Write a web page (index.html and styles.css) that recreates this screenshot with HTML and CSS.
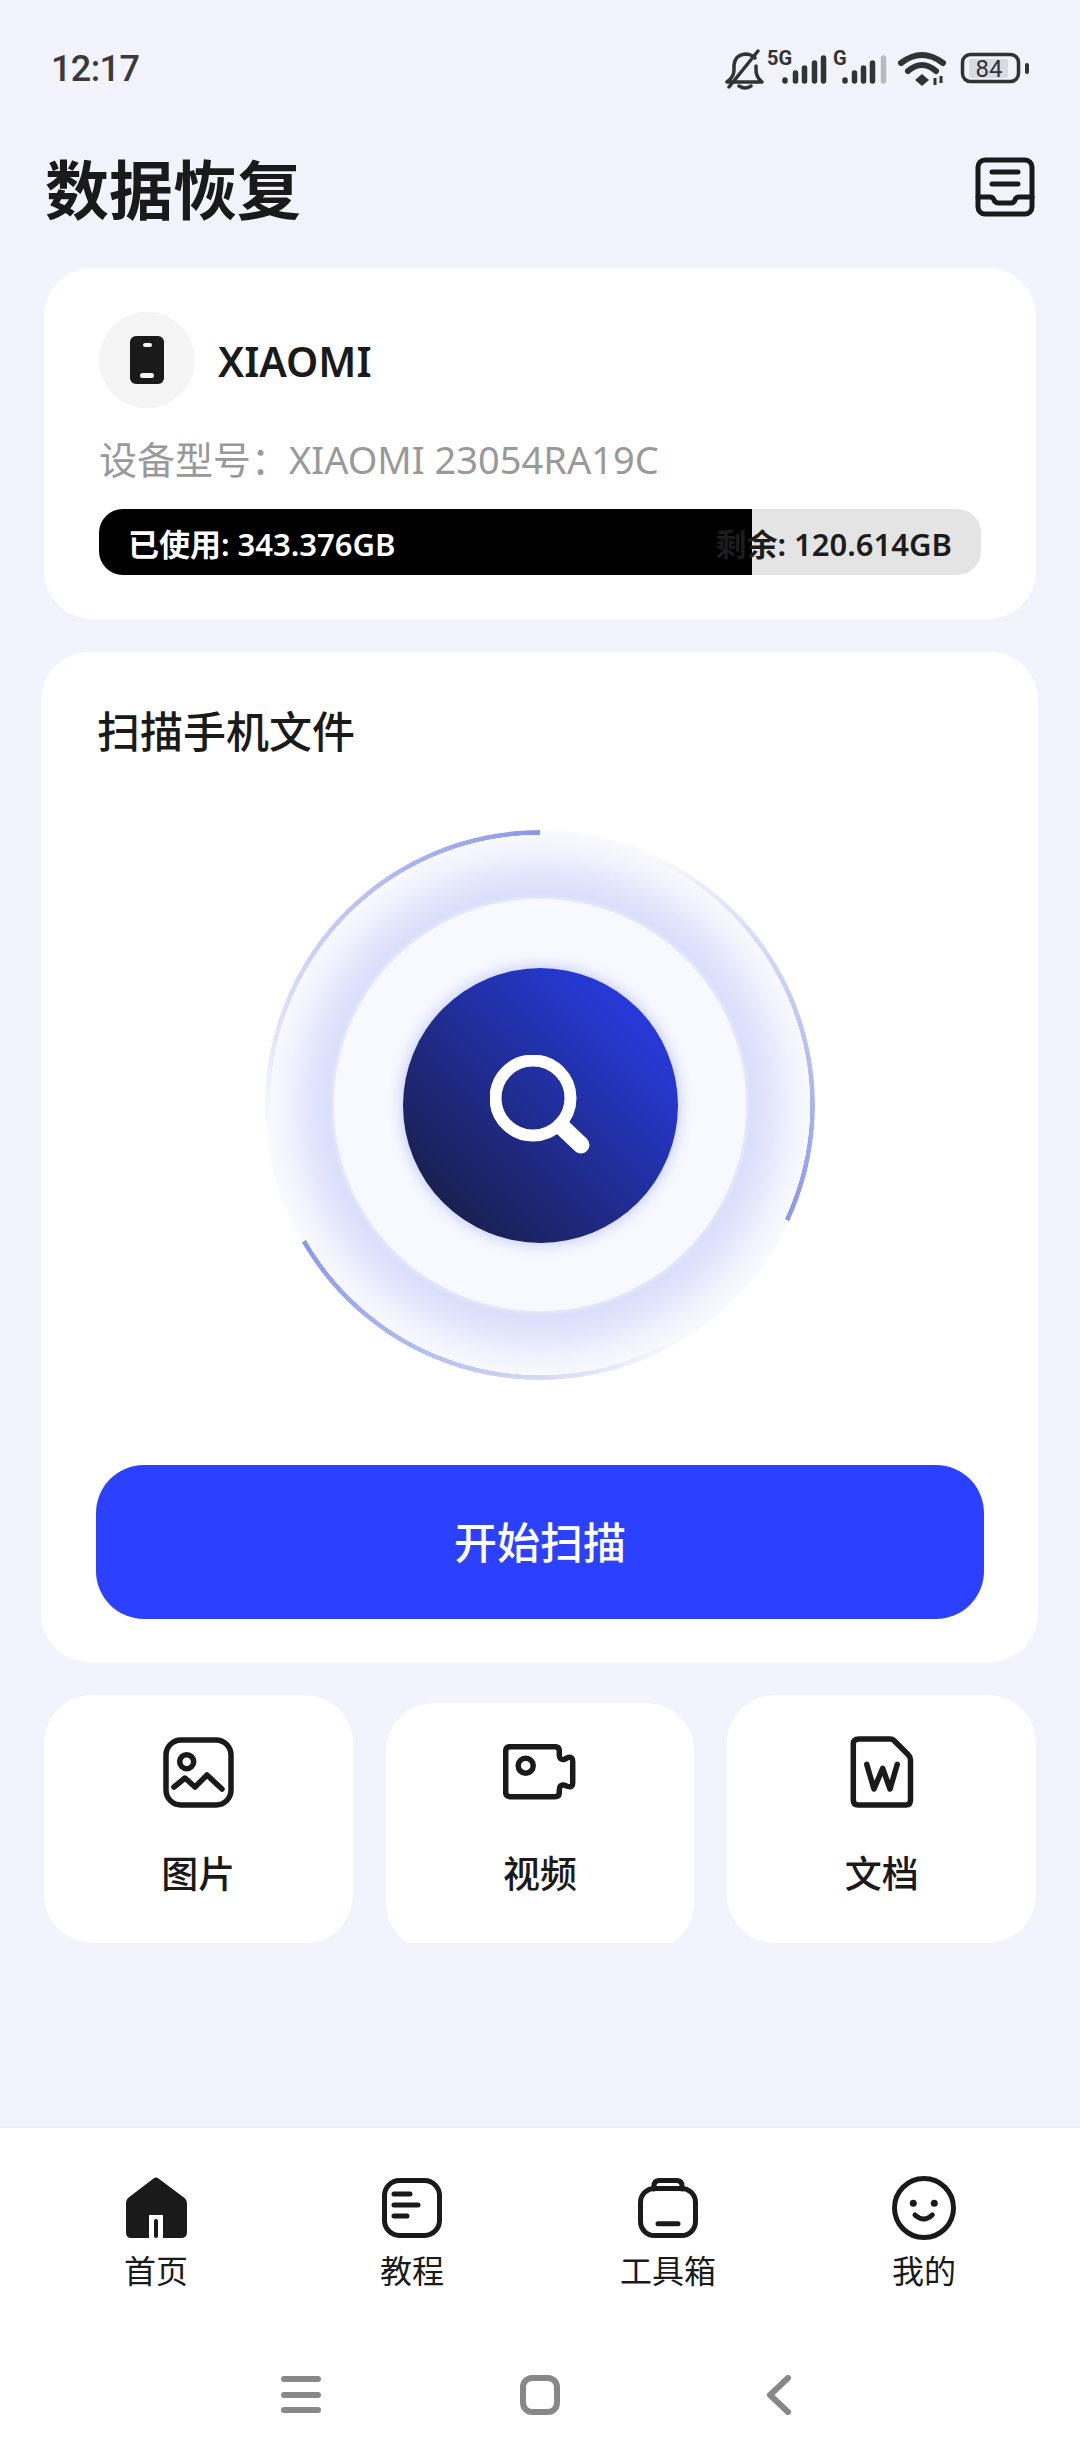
FILE: index.html
```html
<!DOCTYPE html>
<html lang="zh-CN">
<head>
    <meta charset="UTF-8">
    <meta name="viewport" content="width=device-width, initial-scale=1.0">
    <title>数据恢复</title>
    <link rel="stylesheet" href="styles.css">
</head>
<body>
    <div class="page">
        <div class="status-bar">
            <span class="clock">12:17</span>
            <svg class="status-icons" width="310" height="50" viewBox="720 45 310 50">
                <path class="line-thin" d="M727 82 Q734 77 734 70 V65 Q735 55 745 54 Q751 54 755 58 M756 66 V70 Q756 77 762 82 H727 M739 86 Q745 90 751 86 M729 87 L758 51"/>
                <text class="net-text" x="767" y="65">5G</text>
                <g class="bars">
                    <path d="M785 80 V81 M795.5 73 V81 M804.5 68 V81 M814.5 63 V81 M823.5 58 V81"/>
                    <path d="M845 80 V81 M854.5 73 V81 M863.5 68 V81 M872.5 63 V81"/>
                    <path class="bar-off" d="M883.5 58 V81"/>
                </g>
                <text class="net-text" x="833" y="65">G</text>
                <path class="wifi" d="M901 63 Q922 47 943 63 M908 71 Q922 59 936 71"/>
                <path class="wifi-dot" d="M922 74 L929 80 L922 86 L915 80 Z"/>
                <path class="wifi-arrows" d="M935 78 V85 M941 76 V83"/>
                <rect class="batt-box" x="962.5" y="54.5" width="56" height="27" rx="8"/>
                <rect class="batt-fill" x="969" y="59" width="39" height="19" rx="2"/>
                <rect class="batt-tip" x="1025" y="63" width="4" height="11" rx="2"/>
                <text class="batt-text" x="989" y="77">84</text>
            </svg>
        </div>

        <div class="header">
            <h1>数据恢复</h1>
            <svg class="icon-inbox" width="60" height="60" viewBox="0 0 60 60">
                <rect x="3" y="3" width="54" height="54" rx="7"/>
                <path d="M17 15 H43 M17 27 H43 M3 40 H15 Q18 40 19 43 Q20 46 24 46 H36 Q39 46 40 43 Q41 40 44 40 H57"/>
            </svg>
        </div>

        <section class="card device-card">
            <div class="device-head">
                <div class="device-avatar">
                    <div class="phone">
                        <span class="phone-cam"></span>
                        <span class="phone-btn"></span>
                    </div>
                </div>
                <span class="device-name">XIAOMI</span>
            </div>
            <p class="device-model">设备型号：XIAOMI 23054RA19C</p>
            <div class="storage">
                <div class="storage-used" style="width: 74%"></div>
                <span class="storage-label used-label">已使用: 343.376GB</span>
                <span class="storage-label free-label">剩余: 120.614GB</span>
            </div>
        </section>

        <section class="card scan-card">
            <h2>扫描手机文件</h2>
            <div class="gauge">
                <div class="gauge-mid">
                    <div class="gauge-core">
                        <svg width="100" height="100" viewBox="0 0 100 100">
                            <circle cx="43" cy="43" r="37.5"/>
                            <path d="M71 71 L91 90"/>
                        </svg>
                    </div>
                </div>
            </div>
            <button class="scan-btn">开始扫描</button>
        </section>

        <div class="tools">
            <div class="card tool">
                <div class="tool-icon">
                    <svg width="72" height="72" viewBox="0 0 72 72">
                        <rect x="4" y="4" width="65" height="65" rx="15"/>
                        <circle cx="24.7" cy="25.7" r="7"/>
                        <path d="M12 51 L23 42 L33 51 L45 39 L60 53"/>
                    </svg>
                </div>
                <span>图片</span>
            </div>
            <div class="card tool tool-mid">
                <div class="tool-icon">
                    <svg width="73" height="56" viewBox="0 0 73 56">
                        <path d="M7 2.7 H52 Q56.3 2.7 56.3 7 V11 Q56.3 16 61 15.5 L65 13.5 Q69.7 12.5 69.7 17 V39 Q69.7 44 65 42.5 L61 41 Q56.3 40.5 56.3 46 V48.5 Q56.3 52.7 52 52.7 H7 Q2.7 52.7 2.7 48.5 V7 Q2.7 2.7 7 2.7 Z"/>
                        <circle cx="22.7" cy="21.7" r="7.5"/>
                    </svg>
                </div>
                <span>视频</span>
            </div>
            <div class="card tool">
                <div class="tool-icon">
                    <svg width="64" height="72" viewBox="0 0 64 72">
                        <path d="M9 3 H40 Q42.5 3 44 4.5 L58 18.5 Q60.5 21 60.5 24 V64 Q60.5 69 56 69 H8 Q3.3 69 3.3 64 V8 Q3.3 3 9 3 Z"/>
                        <path d="M16.7 28.3 L24 53 L32.7 32.3 L40 53 L47.3 28.3"/>
                    </svg>
                </div>
                <span>文档</span>
            </div>
        </div>

        <div class="bottom">
            <nav class="tabs">
                <div class="tab">
                    <svg width="62" height="66" viewBox="0 -2 62 66">
                        <path class="solid" d="M28.5 1.5 Q31 -0.5 33.5 1.5 L59.5 21 Q62 23 62 26 V55 Q62 61 56 61 H38 V38 H24 V61 H6 Q1 61 1 55 V26 Q1 23 3 21 Z"/>
                        <path class="door" d="M31 44 V59"/>
                    </svg>
                    <span>首页</span>
                </div>
                <div class="tab">
                    <svg width="60" height="66" viewBox="0 -3 60 66">
                        <rect x="2.5" y="2.5" width="55" height="55" rx="15"/>
                        <path d="M12 16 H28 M12 27 H36 M12 38 H25"/>
                    </svg>
                    <span>教程</span>
                </div>
                <div class="tab">
                    <svg width="60" height="66" viewBox="0 -3 60 66">
                        <rect x="2.5" y="10.5" width="55" height="47" rx="14"/>
                        <path d="M16 11 V8 Q16 2.5 21.5 2.5 H38.5 Q44 2.5 44 8 V11 M20 45.7 H40"/>
                    </svg>
                    <span>工具箱</span>
                </div>
                <div class="tab">
                    <svg width="64" height="66" viewBox="0 -1 64 66">
                        <circle cx="32" cy="32" r="29.5"/>
                        <circle class="solid" cx="21.3" cy="27.3" r="3.5"/>
                        <circle class="solid" cx="42.3" cy="27.3" r="3.5"/>
                        <path d="M23 39 Q31.7 47 40.3 39"/>
                    </svg>
                    <span>我的</span>
                </div>
            </nav>
            <div class="sys-nav">
                <svg width="40" height="40" viewBox="0 0 40 40">
                    <path d="M3 4 H37 M3 20 H37 M3 35 H37"/>
                </svg>
                <svg width="40" height="40" viewBox="0 0 40 40">
                    <rect x="3" y="3" width="34" height="34" rx="9"/>
                </svg>
                <svg width="40" height="40" viewBox="0 0 40 40">
                    <path d="M29 3 L11 20 L29 37"/>
                </svg>
            </div>
        </div>
    </div>
</body>
</html>
```

FILE: styles.css
```css
* {
    box-sizing: border-box;
}

body {
    margin: 0;
    background-color: #f2f3fd;
    font-family: "Noto Sans", "Noto Sans CJK SC", sans-serif;
    color: #1a1a1a;
}

.page {
    width: 1080px;
    height: 2460px;
    display: flex;
    flex-direction: column;
    overflow: hidden;
}

/* status bar */
.status-bar {
    height: 95px;
    padding: 45px 50px 0 51px;
    display: flex;
    justify-content: space-between;
    align-items: flex-start;
}

.clock {
    font-family: Roboto, sans-serif;
    font-size: 36px;
    font-weight: 500;
    letter-spacing: -0.6px;
    line-height: 48px;
    color: #3a3a3a;
}

.status-icons {
    fill: none;
}

.line-thin {
    stroke: #333;
    stroke-width: 3.5;
    stroke-linecap: round;
    stroke-linejoin: round;
}

.net-text {
    font-family: Roboto, sans-serif;
    font-size: 20px;
    font-weight: 700;
    fill: #333;
}

.bars path {
    stroke: #333;
    stroke-width: 5.5;
    stroke-linecap: round;
}

.bars .bar-off {
    stroke: #bbb;
}

.wifi {
    stroke: #333;
    stroke-width: 6;
    stroke-linecap: round;
}

.wifi-dot {
    fill: #333;
}

.wifi-arrows {
    stroke: #333;
    stroke-width: 3;
}

.batt-box {
    stroke: #333;
    stroke-width: 3.5;
}

.batt-fill {
    fill: #d9dae4;
}

.batt-tip {
    fill: #333;
}

.batt-text {
    font-family: Roboto, sans-serif;
    font-size: 24px;
    fill: #333;
    text-anchor: middle;
}

/* header */
.header {
    height: 173px;
    padding: 10px 45px 0;
    display: flex;
    justify-content: space-between;
    align-items: center;
}

h1 {
    margin: 7px 0 0;
    font-size: 64px;
    font-weight: 700;
    line-height: 80px;
}

.icon-inbox {
    fill: none;
    stroke: #1a1a1a;
    stroke-width: 5;
    stroke-linecap: round;
    stroke-linejoin: round;
}

.card {
    background-color: #fff;
    border-radius: 48px;
}

/* device card */
.device-card {
    height: 351px;
    margin: 0 44px;
    padding: 44px 55px 0;
}

.device-head {
    display: flex;
    align-items: center;
    gap: 23px;
}

.device-avatar {
    width: 96px;
    height: 96px;
    border-radius: 50%;
    background-color: #f5f5f5;
    display: flex;
    justify-content: center;
    align-items: center;
}

.phone {
    width: 34px;
    height: 48px;
    border-radius: 6px;
    background-color: #1a1a1a;
    display: flex;
    flex-direction: column;
    align-items: center;
    justify-content: space-between;
    padding: 7px 0 6px;
}

.phone-cam {
    width: 9px;
    height: 4px;
    border-radius: 2px;
    background-color: #f5f5f5;
}

.phone-btn {
    width: 14px;
    height: 5px;
    border-radius: 3px;
    background-color: #f5f5f5;
}

.device-name {
    margin-top: 2px;
    font-size: 41px;
    font-weight: 600;
    line-height: 60px;
}

.device-model {
    margin: 23px 0 0;
    font-size: 38px;
    line-height: 56px;
    color: #999;
}

.storage {
    position: relative;
    height: 66px;
    margin-top: 22px;
    border-radius: 24px;
    background-color: #e4e4e4;
    overflow: hidden;
    display: flex;
    justify-content: space-between;
    align-items: center;
    padding: 0 29px;
    font-size: 31px;
    font-weight: 600;
}

.storage-used {
    position: absolute;
    left: 0;
    top: 0;
    bottom: 0;
    background-color: #000;
}

.storage-label {
    position: relative;
}

.used-label {
    color: #fff;
}

.free-label {
    color: #1c1c1c;
}

/* scan card */
.scan-card {
    height: 1010px;
    margin: 33px 42px 0 41px;
    padding: 57px 54px 0 55px;
    display: flex;
    flex-direction: column;
}

h2 {
    margin: 0 0 0 1px;
    font-size: 43px;
    font-weight: 500;
    line-height: 46px;
}

.gauge {
    position: relative;
    align-self: center;
    width: 550px;
    height: 550px;
    margin-top: 75px;
    border-radius: 50%;
    background: radial-gradient(closest-side, #d7dcfa 74%, #e3e6fc 84%, #f1f3fe 92%, #fafbff 100%);
    display: flex;
    justify-content: center;
    align-items: center;
}

.gauge::before {
    content: "";
    position: absolute;
    inset: 0;
    border-radius: 50%;
    background: conic-gradient(
        rgba(138, 151, 234, 0) 0deg 25deg,
        #8a97ea 115deg,
        rgba(138, 151, 234, 0) 115deg 150deg,
        #8a97ea 240deg,
        rgba(138, 151, 234, 0) 240deg 265deg,
        #8a97ea 360deg
    );
    -webkit-mask: radial-gradient(closest-side, transparent calc(100% - 5px), #000 calc(100% - 4.5px));
    mask: radial-gradient(closest-side, transparent calc(100% - 5px), #000 calc(100% - 4.5px));
}

.gauge-mid {
    width: 412px;
    height: 412px;
    border-radius: 50%;
    background-color: #f8f9ff;
    box-shadow: 0 0 6px rgba(255, 255, 255, 0.9);
    display: flex;
    justify-content: center;
    align-items: center;
}

.gauge-core {
    width: 275px;
    height: 275px;
    border-radius: 50%;
    background: linear-gradient(45deg, #191f4c 12%, #2437c8 75%, #2a3ae0 90%);
    box-shadow: 0 0 16px #b8c0fb;
    display: flex;
    justify-content: center;
    align-items: center;
}

.gauge-core svg {
    fill: none;
    stroke: #fff;
    stroke-width: 12;
    stroke-linecap: round;
}

.gauge-core path {
    stroke-width: 17;
}

.scan-btn {
    height: 154px;
    margin-top: 85px;
    padding-bottom: 5px;
    border: none;
    border-radius: 48px;
    background-color: #2c40ff;
    color: #fff;
    font-family: inherit;
    font-size: 43px;
    font-weight: 500;
}

/* three shortcut tiles */
.tools {
    height: 248px;
    margin: 33px 44px 0;
    display: grid;
    grid-template-columns: repeat(3, 1fr);
    gap: 33px;
    align-items: start;
    overflow: hidden;
}

.tool {
    height: 248px;
    padding-top: 41px;
    display: flex;
    flex-direction: column;
    align-items: center;
    font-size: 37px;
    font-weight: 500;
}

.tool-mid {
    margin-top: 8px;
    padding-top: 33px;
}

.tool-icon {
    height: 72px;
    display: flex;
    align-items: center;
    margin-bottom: 41px;
}

.tool-icon svg {
    fill: none;
    stroke: #1a1a1a;
    stroke-width: 5.5;
    stroke-linecap: round;
    stroke-linejoin: round;
}

.tool span {
    line-height: 50px;
}

/* bottom navigation */
.bottom {
    margin-top: auto;
    height: 332px;
    background-color: #fff;
    box-shadow: 0 -1px 3px rgba(0, 0, 0, 0.04);
}

.tabs {
    padding: 47px 28px 0;
    display: grid;
    grid-template-columns: repeat(4, 1fr);
}

.tab {
    display: flex;
    flex-direction: column;
    align-items: center;
    font-size: 32px;
    line-height: 32px;
}

.tab svg {
    fill: none;
    stroke: #1a1a1a;
    stroke-width: 5;
    stroke-linecap: round;
    stroke-linejoin: round;
    margin-bottom: 14px;
}

.tab svg .solid {
    fill: #1a1a1a;
    stroke: none;
}

.tab svg .door {
    stroke-width: 4;
}

.sys-nav {
    margin-top: 88px;
    display: flex;
    justify-content: center;
    gap: 199px;
}

.sys-nav svg {
    fill: none;
    stroke: #888;
    stroke-width: 6;
    stroke-linecap: round;
    stroke-linejoin: round;
}
```
